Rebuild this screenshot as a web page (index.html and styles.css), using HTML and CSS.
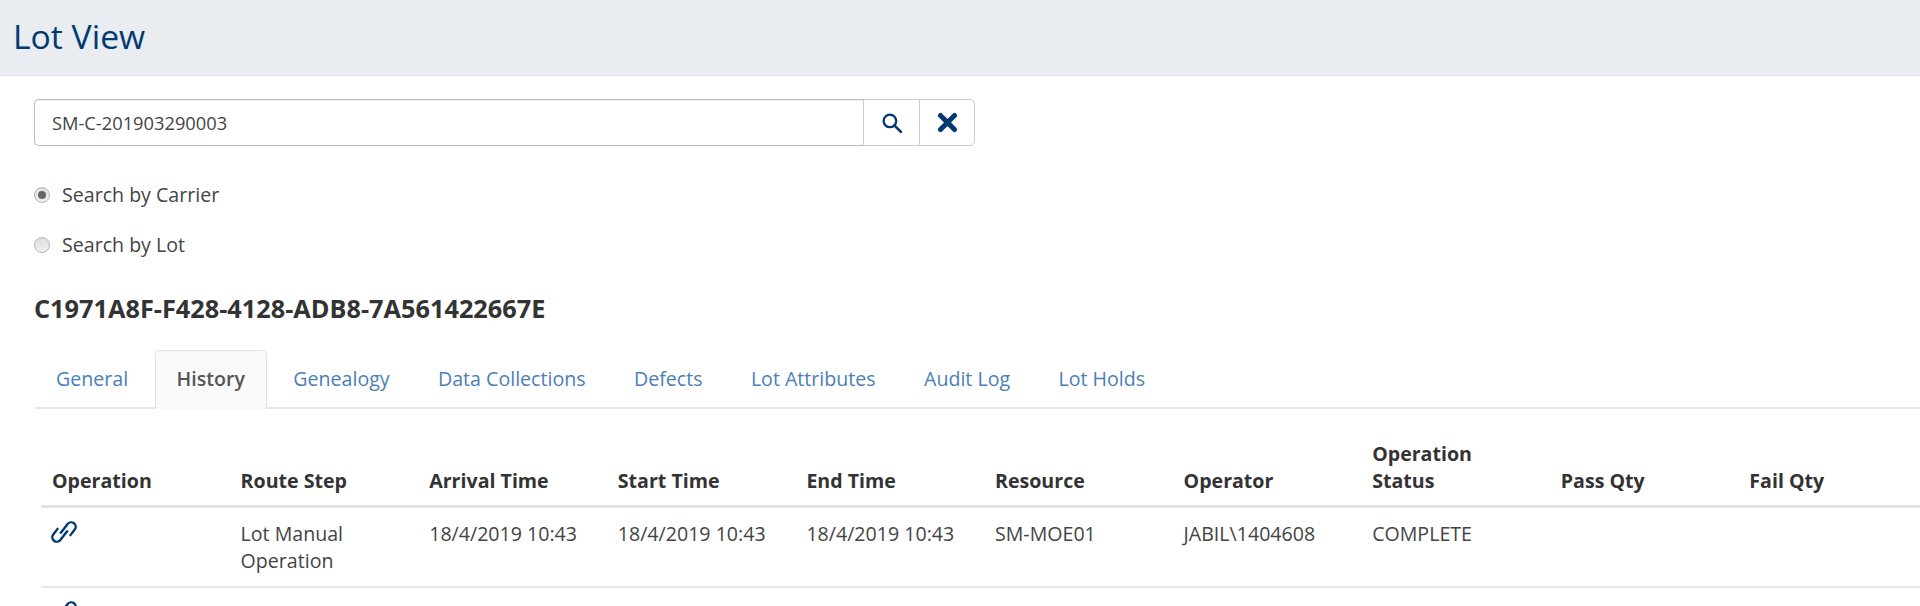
FILE: index.html
```html
<!DOCTYPE html>
<html lang="en">
<head>
<meta charset="utf-8">
<title>Lot View</title>
<link rel="stylesheet" href="styles.css">
</head>
<body>
<header class="page-header"><h1>Lot View</h1></header>
<main class="content">
  <div class="search">
    <input class="search-input" type="text" value="SM-C-201903290003">
    <button class="search-btn" type="button" aria-label="Search">
      <svg width="22" height="22" viewBox="0 0 21 21"><circle cx="8.5" cy="8.5" r="6" fill="none" stroke="#003a70" stroke-width="2.2"/><path d="M13 13l6 6" stroke="#003a70" stroke-width="2.6" stroke-linecap="round"/></svg>
    </button>
    <button class="search-btn last" type="button" aria-label="Clear">
      <svg width="21" height="21" viewBox="0 0 21 21"><path d="M3.5 3.5l14 14M17.5 3.5l-14 14" stroke="#003a70" stroke-width="5" stroke-linecap="round"/></svg>
    </button>
  </div>
  <label class="radio-row"><span class="radio checked"></span>Search by Carrier</label>
  <label class="radio-row"><span class="radio"></span>Search by Lot</label>
  <h2 class="lot-id">C1971A8F-F428-4128-ADB8-7A561422667E</h2>
  <nav class="tabs">
    <a>General</a><a class="active">History</a><a>Genealogy</a><a>Data Collections</a><a>Defects</a><a>Lot Attributes</a><a>Audit Log</a><a>Lot Holds</a>
  </nav>
  <table class="history">
    <thead>
      <tr><th>Operation</th><th>Route Step</th><th>Arrival Time</th><th>Start Time</th><th>End Time</th><th>Resource</th><th>Operator</th><th>Operation Status</th><th>Pass Qty</th><th>Fail Qty</th></tr>
    </thead>
    <tbody>
      <tr>
        <td><svg class="link" width="26" height="26" viewBox="0 0 26 26"><g transform="rotate(-52 13 13)" fill="none" stroke="#003a70" stroke-width="2.4" stroke-linecap="round"><path d="M11.5 6H4.5a4.5 4.5 0 0 0 0 9h11"/><path d="M14.5 20h7a4.5 4.5 0 0 0 0-9h-11"/></g></svg></td>
        <td>Lot Manual Operation</td><td>18/4/2019 10:43</td><td>18/4/2019 10:43</td><td>18/4/2019 10:43</td><td>SM-MOE01</td><td>JABIL\1404608</td><td>COMPLETE</td><td></td><td></td>
      </tr>
      <tr>
        <td><svg class="link" width="26" height="26" viewBox="0 0 26 26"><g transform="rotate(-52 13 13)" fill="none" stroke="#003a70" stroke-width="2.4" stroke-linecap="round"><path d="M11.5 6H4.5a4.5 4.5 0 0 0 0 9h11"/><path d="M14.5 20h7a4.5 4.5 0 0 0 0-9h-11"/></g></svg></td>
        <td></td><td></td><td></td><td></td><td></td><td></td><td></td><td></td><td></td>
      </tr>
    </tbody>
  </table>
</main>
</body>
</html>
```
FILE: styles.css
```css
* { box-sizing: border-box; }
html, body { margin: 0; height: 606px; overflow: hidden; background: #fff; }
body { font-family: "Open Sans", sans-serif; font-size: 19.6px; line-height: 27px; color: #333; }
.page-header { height: 76px; background: #e9ecf1; border-bottom: 1px solid #dfe3e8; padding: 0 13px 3px; display: flex; align-items: center; }
.page-header h1 { margin: 0; font-size: 33.7px; font-weight: 400; line-height: 1.2; color: #003a70; }
.content { height: 530px; overflow: hidden; padding: 23px 0 0 34px; }
.search { display: flex; width: 941px; height: 47px; margin-bottom: 35px; }
.search-input { flex: 1; min-width: 0; height: 47px; border: 1px solid #bbb; border-right: 0; border-radius: 5px 0 0 5px; padding: 0 17px; font: 18.3px "Open Sans", sans-serif; color: #444; outline: 0; box-shadow: inset 0 1px 1px rgba(0,0,0,.06); }
.search-btn { width: 56px; height: 47px; padding: 0; background: #fff; border: 1px solid #ccc; border-right: 0; display: flex; align-items: center; justify-content: center; }
.search-btn.last { border-right: 1px solid #ccc; border-radius: 0 5px 5px 0; }
.radio-row { display: flex; align-items: center; height: 27px; margin-bottom: 23px; color: #444; }
.radio { width: 16px; height: 16px; border-radius: 50%; margin-right: 12px; border: 1px solid #b5b5b5; background: linear-gradient(#ddd, #f1f1f1); position: relative; }
.radio.checked::after { content: ""; position: absolute; left: 3px; top: 3px; width: 8px; height: 8px; border-radius: 50%; background: #666; }
.lot-id { margin: 34px 0 26px; font-size: 25.3px; font-weight: 700; line-height: 32px; color: #333; }
.tabs { display: flex; height: 59px; border-bottom: 2px solid #e7e7e7; }
.tabs a { padding: 14px 21px 0; margin-right: 4.4px; color: #4a7fb8; height: 59px; border: 1px solid transparent; border-bottom: 0; }
.tabs a.active { color: #555; font-weight: 600; background: #fafafa; border-color: #e2e2e2; border-radius: 5px 5px 0 0; }
.history { margin: 31px 0 0 7px; width: 1886px; table-layout: fixed; border-collapse: collapse; }
.history th { text-align: left; vertical-align: bottom; padding: 0 11px 11px; font-weight: 700; color: #333; border-bottom: 3px solid #e3e3e3; }
.history td { vertical-align: top; padding: 12px 11px 12px; color: #444; border-bottom: 2px solid #e8e8e8; }
.link { display: block; margin: -1px 0 1px -1px; }
```
